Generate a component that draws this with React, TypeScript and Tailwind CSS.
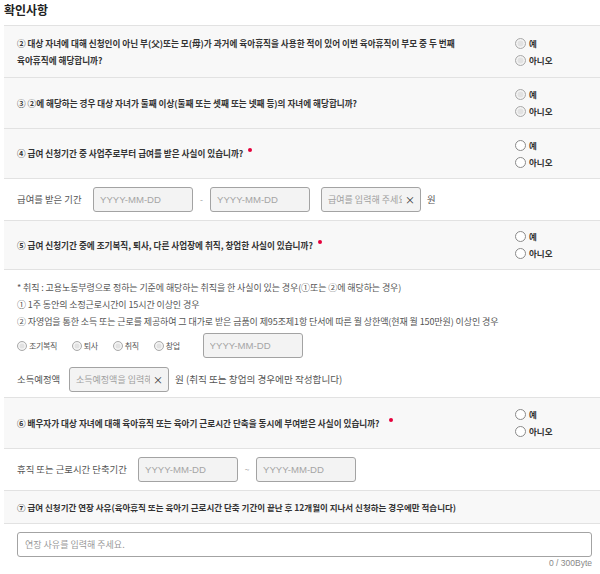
import React from "react";

const kr = "font-['Noto_Sans_CJK_KR','Noto_Sans',sans-serif]";

function Dot({ gap = "ml-[5px]" }: { gap?: string }) {
  return <span className={`inline-block w-[4px] h-[4px] rounded-full bg-[#e6003c] relative -top-[5px] ${gap}`} />;
}

function Radio({ label, disabled }: { label: string; disabled?: boolean }) {
  return (
    <label className="flex items-center gap-[3px] h-[17px]">
      {disabled ? (
        <span className="w-[11px] h-[11px] rounded-full border border-[#ababab] bg-[#e2e2e2] shadow-[inset_0_0_0_1.5px_#f4f4f4] shrink-0" />
      ) : (
        <span className="w-[11px] h-[11px] rounded-full border border-[#8a8a8a] bg-white shrink-0" />
      )}
      <span className="text-[#333] font-semibold">{label}</span>
    </label>
  );
}

function YesNo({ disabled }: { disabled?: boolean }) {
  return (
    <div className="w-[85px] shrink-0 flex flex-col">
      <Radio label="예" disabled={disabled} />
      <Radio label="아니오" disabled={disabled} />
    </div>
  );
}

function Question({ h, children, disabled }: { h: string; children: React.ReactNode; disabled?: boolean }) {
  return (
    <div className={`${h} flex items-center border-t border-[#e2e2e2] bg-[#f8f8f8] pl-[13px]`}>
      <div className="flex-1 pr-[50px] leading-[17px] text-[8.6px] text-[#333] font-semibold break-keep">{children}</div>
      <YesNo disabled={disabled} />
    </div>
  );
}

function DateBox() {
  return (
    <input
      readOnly
      placeholder="YYYY-MM-DD"
      className="w-[100px] h-[25px] border border-[#a3a3a3] rounded-[3px] bg-[#f3f3f3] pl-[6px] text-[9.6px] font-['Liberation_Sans',sans-serif] placeholder:text-[#a5a5a5] outline-none"
    />
  );
}

function AmountBox({ text }: { text: string }) {
  return (
    <div className="w-[100px] h-[25px] border border-[#a3a3a3] rounded-[3px] bg-[#f3f3f3] pl-[6px] pr-[5px] flex items-center gap-[3px]">
      <input
        readOnly
        placeholder={text}
        className={`${kr} min-w-0 flex-1 bg-transparent text-[9px] placeholder:text-[#a0a0a0] outline-none`}
      />
      <span className="text-[#333] text-[10px] leading-none">×</span>
    </div>
  );
}

function SmallRadio({ label }: { label: string }) {
  return (
    <label className="flex items-center gap-[2px]">
      <span className="w-[10px] h-[10px] rounded-full border border-[#ababab] bg-[#e2e2e2] shadow-[inset_0_0_0_1.5px_#f4f4f4] shrink-0" />
      <span className="text-[8px] tracking-[-0.4px] text-[#555]">{label}</span>
    </label>
  );
}

export default function App() {
  return (
    <div className={`${kr} w-[600px] bg-white text-[8.5px] text-[#555] pl-[4px]`}>
      <div className="h-[25px] pt-[2px]">
        <h2 className="text-[12px] leading-[16px] font-bold text-[#222]">확인사항</h2>
      </div>

      <Question h="h-[52px]" disabled>
        ② 대상 자녀에 대해 신청인이 아닌 부(父)또는 모(母)가 과거에 육아휴직을 사용한 적이 있어 이번 육아휴직이 부모 중 두 번째 육아휴직에 해당합니까?
      </Question>

      <Question h="h-[51px]" disabled>
        ③ ②에 해당하는 경우 대상 자녀가 둘째 이상(둘째 또는 셋째 또는 넷째 등)의 자녀에 해당합니까?
      </Question>

      <Question h="h-[50px]">
        ④ 급여 신청기간 중 사업주로부터 급여를 받은 사실이 있습니까?<Dot />
      </Question>

      <div className="h-[42px] border-t border-[#e2e2e2] pl-[13px] flex items-center">
        <span className="w-[76px] text-[9.4px]">급여를 받은 기간</span>
        <DateBox />
        <span className="w-[17px] text-center text-[#999]">-</span>
        <DateBox />
        <span className="w-[11px]" />
        <AmountBox text="급여를 입력해 주세요" />
        <span className="ml-[6px] text-[9.4px]">원</span>
      </div>

      <Question h="h-[49px]">
        ⑤ 급여 신청기간 중에 조기복직, 퇴사, 다른 사업장에 취직, 창업한 사실이 있습니까?<Dot />
      </Question>

      <div className="h-[128px] border-t border-[#e2e2e2] pl-[13px] pt-[9px] flex flex-col">
        <div className="text-[9px] tracking-[-0.1px]">
          <p className="leading-[17px]">* 취직 : 고용노동부령으로 정하는 기준에 해당하는 취직을 한 사실이 있는 경우(①또는 ②에 해당하는 경우)</p>
          <p className="leading-[17px]">① 1주 동안의 소정근로시간이 15시간 이상인 경우</p>
          <p className="leading-[17px]">② 자영업을 통한 소득 또는 근로를 제공하여 그 대가로 받은 금품이 제95조제1항 단서에 따른 월 상한액(현재 월 150만원) 이상인 경우</p>
        </div>
        <div className="mt-[3px] flex items-center">
          <div className="flex items-center gap-[15px]">
            <SmallRadio label="조기복직" />
            <SmallRadio label="퇴사" />
            <SmallRadio label="취직" />
            <SmallRadio label="창업" />
          </div>
          <span className="w-[23px]" />
          <DateBox />
        </div>
        <div className="mt-[9px] flex items-center">
          <span className="w-[52px] text-[9.4px]">소득예정액</span>
          <AmountBox text="소득예정액을 입력해 주세요" />
          <span className="ml-[6px] text-[9.6px]">원 (취직 또는 창업의 경우에만 작성합니다)</span>
        </div>
      </div>

      <Question h="h-[51px]">
        ⑥ 배우자가 대상 자녀에 대해 육아휴직 또는 육아기 근로시간 단축을 동시에 부여받은 사실이 있습니까?<Dot gap="ml-[9px]" />
      </Question>

      <div className="h-[42px] border-t border-[#e2e2e2] pl-[13px] flex items-center">
        <span className="w-[121px] text-[9.4px]">휴직 또는 근로시간 단축기간</span>
        <DateBox />
        <span className="w-[18px] text-center text-[#999]">~</span>
        <DateBox />
      </div>

      <div className="h-[33px] border-t border-[#e2e2e2] bg-[#f8f8f8] pl-[13px] flex items-center text-[#333] font-semibold">
        ⑦ 급여 신청기간 연장 사유(육아휴직 또는 육아기 근로시간 단축 기간이 끝난 후 12개월이 지나서 신청하는 경우에만 적습니다)
      </div>

      <div className="h-[51px] border-t border-[#e2e2e2] pl-[13px] pr-[8px] pt-[8px]">
        <input
          readOnly
          placeholder="연장 사유를 입력해 주세요."
          className={`${kr} w-full h-[25px] border border-[#a3a3a3] rounded-[3px] bg-white pl-[7px] text-[9px] placeholder:text-[#999] outline-none`}
        />
        <div className="text-right leading-[12px] text-[8.5px] text-[#888] font-['Liberation_Sans',sans-serif]">0 / 300Byte</div>
      </div>
    </div>
  );
}
